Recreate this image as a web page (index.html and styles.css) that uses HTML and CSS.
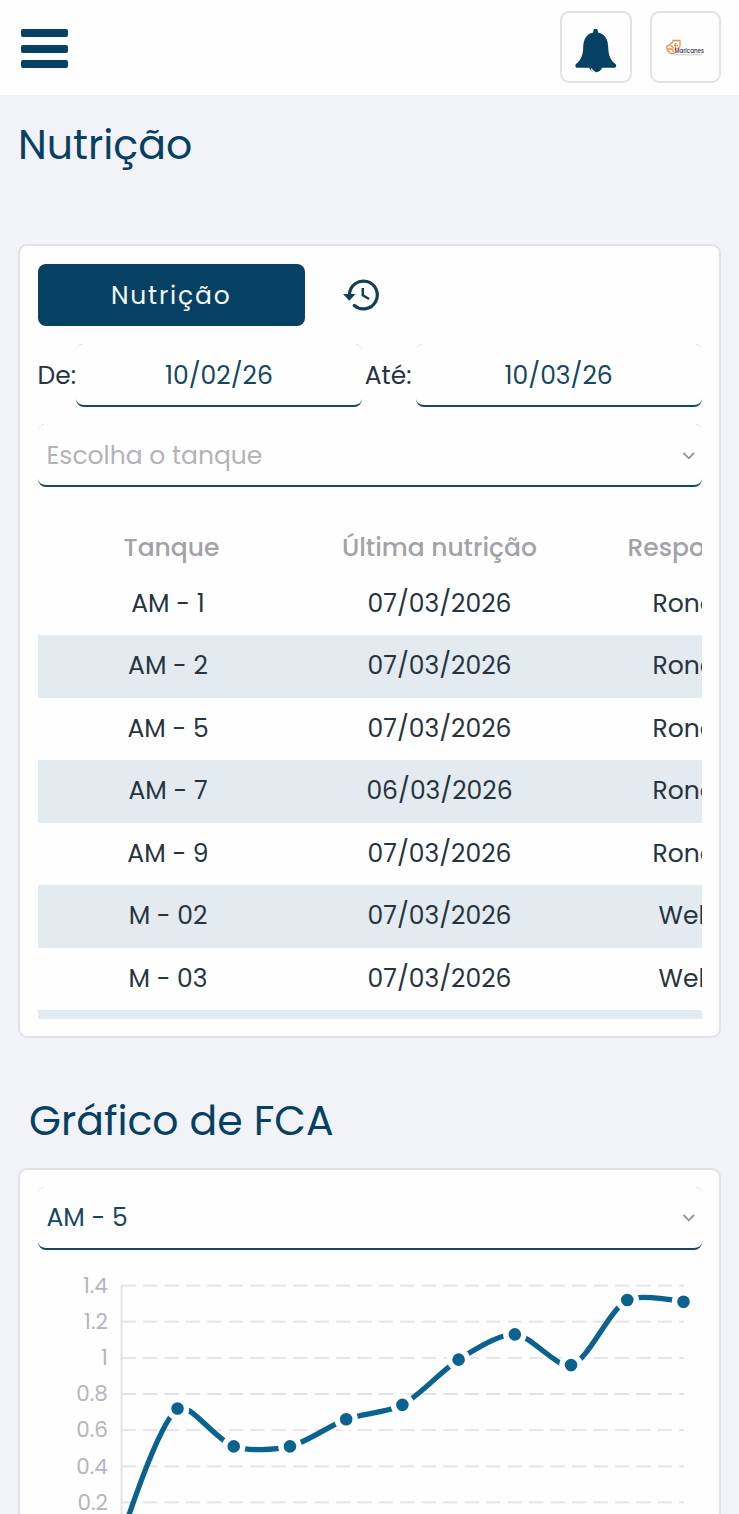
FILE: index.html
```html
<!DOCTYPE html>
<html lang="pt-BR">
<head>
<meta charset="utf-8">
<title>Nutrição</title>
<link rel="stylesheet" href="styles.css">
</head>
<body>
<header class="topbar">
  <button class="menu" aria-label="Menu"><span></span><span></span><span></span></button>
  <div class="actions">
    <button class="tile" aria-label="Notificações">
      <svg width="42" height="46" viewBox="0 0 42 46">
        <path d="M14 39a6.700 6.200 0 0 0 13.200 0z" fill="#064163"/>
        <path d="M18.200 3.200a2.300 2.300 0 0 1 4.700 0v1.200C30 5.800 33 11.500 33.200 19c.2 9 2.800 13.500 7.300 17 1.500 1.600.5 3.800-1.500 3.800H2.500C.5 39.800-.3 37.600 1 36 5.500 32.500 8 28 8.200 19 8.400 11.500 11.300 5.800 18.200 4.400z" fill="#064163"/>
        <path d="M16.300 40.500q.9 3 3.800 3.600" fill="none" stroke="#fff" stroke-width="1.100"/>
      </svg>
    </button>
    <button class="tile" aria-label="Maricanes">
      <svg width="42" height="24" viewBox="0 0 42 24">
        <g fill="none" stroke="#ee9150" stroke-width="1.300">
          <path d="M9 5V3.500h7v5c0 2-2 3-3.500 3"/>
          <path d="M10 8.500h4M11.500 6v6"/>
          <path d="M9 5.500c-3 0-2.500 3-4.500 3S2 11 3.500 12c-1 2 1.500 2.500 2 3.500s4 2 5.500 0"/>
          <path d="M6.500 8.500c2 0 1.500 2.500 3.500 2.500M3.500 12h4c1 0 1.500 1 1.500 3"/>
        </g>
        <text class="logo-name" x="10.500" y="16" textLength="29.500" lengthAdjust="spacingAndGlyphs">Maricanes</text>
        <path d="M10 17.800h28" stroke="#b5b3bd" stroke-width=".7"/>
      </svg>
    </button>
  </div>
</header>

<main class="page">
  <h1 class="title">Nutrição</h1>

  <section class="card nutrition">
    <div class="tabs">
      <button class="tab-active">Nutrição</button>
      <svg class="history" width="38" height="34" viewBox="0 0 38 34">
        <path d="M7.500 16.500a13.900 13.900 0 1 1 4.800 11" fill="none" stroke="#123f55" stroke-width="3.200" stroke-linecap="round"/>
        <path d="M1 16h12.500l-6.200 6.800z" fill="#123f55"/>
        <path d="M20.800 10v7.300l6.300 3.700" fill="none" stroke="#123f55" stroke-width="2.500"/>
      </svg>
    </div>
    <div class="period">
      <span class="period-label from">De:</span>
      <div class="field date">10/02/26</div>
      <span class="period-label until">Até:</span>
      <div class="field date">10/03/26</div>
    </div>
    <div class="field select placeholder">
      <span class="placeholder-text">Escolha o tanque</span>
      <svg width="14" height="10" viewBox="0 0 14 10"><path d="M1.500 2l5.300 5.300L12 2" fill="none" stroke="#929196" stroke-width="1.800"/></svg>
    </div>
    <div class="table">
      <div class="row head"><span class="h-tank">Tanque</span><span class="h-last">Última nutrição</span><span class="resp h-resp">Responsável</span></div>
      <div class="row"><span>AM - 1</span><span>07/03/2026</span><span class="resp ron">Ronaldo</span></div>
      <div class="row"><span>AM - 2</span><span>07/03/2026</span><span class="resp ron">Ronaldo</span></div>
      <div class="row"><span>AM - 5</span><span>07/03/2026</span><span class="resp ron">Ronaldo</span></div>
      <div class="row"><span>AM - 7</span><span>06/03/2026</span><span class="resp ron">Ronaldo</span></div>
      <div class="row"><span>AM - 9</span><span>07/03/2026</span><span class="resp ron">Ronaldo</span></div>
      <div class="row"><span>M - 02</span><span>07/03/2026</span><span class="resp wel">Welton</span></div>
      <div class="row"><span>M - 03</span><span>07/03/2026</span><span class="resp wel">Welton</span></div>
      <div class="row"></div>
    </div>
  </section>

  <h2 class="title chart-title">Gráfico de FCA</h2>

  <section class="card chart-card">
    <div class="field select">
      <span class="tank-value">AM - 5</span>
      <svg width="14" height="10" viewBox="0 0 14 10"><path d="M1.500 2l5.300 5.300L12 2" fill="none" stroke="#929196" stroke-width="1.800"/></svg>
    </div>
    <svg class="chart" id="chart" width="664" height="265" viewBox="38 1249 664 265"></svg>
  </section>
</main>
<script src="chart.js"></script>
</body>
</html>
```

FILE: styles.css
```css
* { box-sizing: border-box; }

body {
  margin: 0;
  height: 1514px;
  overflow: hidden;
  background: #f2f3f9;
  color: #26343f;
  font-family: Poppins, Inter, "Open Sans", sans-serif;
  font-size: 25px;
}

button {
  padding: 0;
  border: 0;
  background: none;
  font: inherit;
}

.topbar {
  display: flex;
  justify-content: space-between;
  align-items: flex-start;
  height: 95px;
  padding: 11.400px 18px 0 21px;
  background: #fefefe;
}

.menu {
  display: flex;
  flex-direction: column;
  gap: 7.5px;
  margin-top: 17.500px;
}

.menu span {
  width: 47px;
  height: 8.200px;
  border-radius: 2px;
  background: #064163;
}

.actions {
  display: flex;
  gap: 18px;
}

.tile {
  display: flex;
  align-items: center;
  justify-content: center;
  width: 71.500px;
  height: 71.500px;
  border: 2px solid #e2e1e7;
  border-radius: 9px;
  background: #fefefe;
}

.tile svg { margin: 7px 0 0; }
.tile + .tile svg { margin: 4px 0 0; }

.logo-name {
  fill: #38374a;
  font-size: 6.500px;
  font-weight: 500;
}

.page { padding: 0 18px; }

.title {
  margin: 0;
  color: #064163;
  font-size: 41px;
  font-weight: 400;
  line-height: 60px;
  white-space: nowrap;
}

h1.title {
  padding-top: 20px;
  height: 149.400px;
}

.card {
  border: 2px solid #e2e1e6;
  border-radius: 9px;
  background: #fefefe;
  padding: 17.500px 17.500px;
}

.nutrition {
  height: 794px;
}

.tabs {
  display: flex;
  align-items: center;
  gap: 37px;
  height: 62.500px;
}

.tab-active {
  width: 267.500px;
  height: 62.500px;
  padding-top: 2px;
  border-radius: 8px;
  background: #064163;
  color: #f4f8fb;
  letter-spacing: 1.800px;
}

.period {
  display: flex;
  align-items: center;
  height: 63px;
  margin-top: 17.500px;
}

.period-label {
  flex: none;
  padding-top: 1px;
  white-space: nowrap;
}

.from { width: 38.500px; }
.until { width: 54px; padding-left: 3px; }

.field {
  position: relative;
  height: 63px;
  border-bottom: 2px solid #164662;
  border-radius: 8px;
  color: #164662;
}

/* Faint rounded top corners of each field */
.field::before,
.field::after {
  content: "";
  position: absolute;
  top: 0;
  width: 6px;
  height: 5px;
  border-top: 1px solid #dddce2;
}

.field::before { left: 0; border-top-left-radius: 6px; }
.field::after { right: 0; border-top-right-radius: 6px; }

.date {
  flex: 1;
  text-align: center;
  line-height: 63px;
}

.select {
  display: flex;
  align-items: center;
  justify-content: space-between;
  padding: 1px 6px 0 9px;
}

.placeholder {
  margin-top: 17px;
  padding-top: 3px;
  color: #b4b3b8;
}

.table {
  height: 532px;
  overflow: hidden;
}

.row {
  display: grid;
  grid-template-columns: 261px 282px 200px;
  height: 62.500px;
  line-height: 62px;
  text-align: center;
  white-space: nowrap;
}

.row.head {
  height: 86.100px;
  padding-top: 30px;
  color: #a3a2a7;
  font-weight: 500;
}

.row:nth-child(odd):not(.head) { background: #e3eaf0; }

.resp { text-align: left; }
.h-tank { padding-left: 7px; }
.h-resp { padding-left: 47px; }
.ron { padding-left: 72px; }
.wel { padding-left: 78px; }

.chart-title {
  margin: 53px 0 16.700px 11px;
}

.chart-card {
  height: 348px;
  padding-top: 17px;
  padding-bottom: 0;
  border-bottom: 0;
  border-radius: 9px 9px 0 0;
  overflow: hidden;
}

.chart {
  display: block;
}

.tick {
  fill: #b5b5c0;
  font-size: 21.500px;
  text-anchor: end;
}
```

FILE: chart.js
```js
const chart = document.getElementById('chart');
const fca = [0, 0.72, 0.51, 0.51, 0.66, 0.74, 0.99, 1.13, 0.96, 1.32, 1.31];
const ticks = [1.4, 1.2, 1, 0.8, 0.6, 0.4, 0.2];
const y = v => 1537.6 - v * 180.75;
const x = i => 121.3 + i * 56.22;
const pts = fca.map((v, i) => [x(i), y(v)]);

let out = '';
for (const t of ticks) {
  out += `<path d="M121.500 ${y(t)}H684" stroke="#e2e1e6" stroke-width="1.800" stroke-dasharray="14.300 7.150"/>`;
  out += `<text class="tick" x="107.800" y="${y(t) + 7.2}">${t}</text>`;
}
out += '<path d="M121.500 1284V1540" stroke="#e2e1e6" stroke-width="1.800"/>';

// Smooth curve, tangents weighted by neighbour distance
const tension = 0.28;
const handles = pts.map((p, i) => {
  const a = pts[i - 1] || p, b = pts[i + 1] || p;
  const d1 = Math.hypot(p[0] - a[0], p[1] - a[1]);
  const d2 = Math.hypot(b[0] - p[0], b[1] - p[1]);
  const f1 = tension * d1 / (d1 + d2), f2 = tension * d2 / (d1 + d2);
  const end = i === 0 || i === pts.length - 1;
  const dx = end ? 0 : b[0] - a[0], dy = end ? 0 : b[1] - a[1];
  return [[p[0] - f1 * dx, p[1] - f1 * dy], [p[0] + f2 * dx, p[1] + f2 * dy]];
});
let d = `M${pts[0]}`;
for (let i = 1; i < pts.length; i++) d += `C${handles[i - 1][1]} ${handles[i][0]} ${pts[i]}`;
out += `<path d="${d}" fill="none" stroke="#0a638f" stroke-width="5.300"/>`;
for (const [px, py] of pts) {
  out += `<circle cx="${px}" cy="${py}" r="9" fill="#0a638f" stroke="#fefefe" stroke-width="5.400"/>`;
}
chart.innerHTML = out;
```
